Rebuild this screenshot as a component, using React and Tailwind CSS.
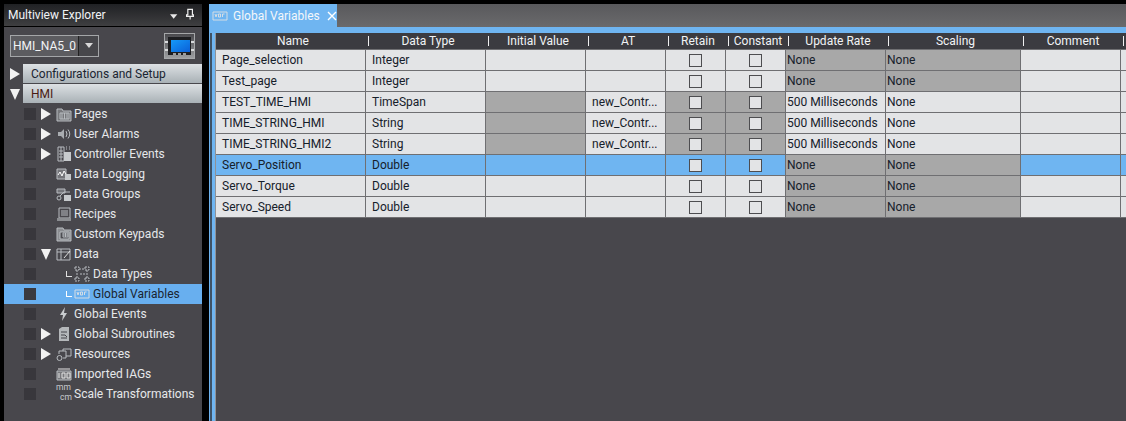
import React from "react";

const F = "font-['Roboto','Noto_Sans',sans-serif]";
const cols = "grid-cols-[150px_120px_100px_80px_60px_60px_100px_135px_100px_1fr]";

const headers = ["Name", "Data Type", "Initial Value", "AT", "Retain", "Constant", "Update Rate", "Scaling", "Comment", ""];

const rows = [
  { n: "Page_selection", t: "Integer", at: "", g: [], u: "None", s: "None", ug: true, sg: true },
  { n: "Test_page", t: "Integer", at: "", g: [], u: "None", s: "None", ug: true, sg: true },
  { n: "TEST_TIME_HMI", t: "TimeSpan", at: "new_Contr...", g: [2, 4, 5], u: "500 Milliseconds", s: "None" },
  { n: "TIME_STRING_HMI", t: "String", at: "new_Contr...", g: [2, 4, 5], u: "500 Milliseconds", s: "None" },
  { n: "TIME_STRING_HMI2", t: "String", at: "new_Contr...", g: [2, 4, 5], u: "500 Milliseconds", s: "None" },
  { n: "Servo_Position", t: "Double", at: "", g: [], u: "None", s: "None", ug: true, sg: true, sel: true },
  { n: "Servo_Torque", t: "Double", at: "", g: [], u: "None", s: "None", ug: true, sg: true },
  { n: "Servo_Speed", t: "Double", at: "", g: [], u: "None", s: "None", ug: true, sg: true },
];

const Ic = ({ children, w = 16, h = 16 }) => (
  <svg width={w} height={h} viewBox="0 0 16 16" fill="none" stroke="#b8bcc0" strokeWidth="1" className="shrink-0">
    {children}
  </svg>
);

const icons = {
  pages: <Ic><path d="M1 3h5l1 2h8v10H1z" fill="#77787c" /><path d="M4 7h9v6H4zM6 7v6M8.500 7v6M11 7v6" /></Ic>,
  alarms: <Ic><path d="M2 6h3l3-3v10l-3-3H2z" fill="#a9acb0" stroke="none" /><path d="M10 5q2 3 0 6M12 3.500q3.500 4.500 0 9" /></Ic>,
  events: <Ic><path d="M2 1h6v14H2z" /><path d="M8 6h7v9H8z" fill="#c8cbce" stroke="none" /><path d="M3 5h4M3 8h4M3 11h4M5 1v14M10 1h1M13 1h1M10 3h1M13 3h1" /></Ic>,
  logging: <Ic><path d="M1 3h9v10H1z" fill="#74757a" /><path d="M2 9l2-3 2 4 2-5 2 3" stroke="#fff" /><path d="M9 8h6v6H9z" fill="#c6c9cc" stroke="none" /></Ic>,
  groups: <Ic><path d="M1 3h8v4H1z" fill="#74757a" /><circle cx="3" cy="12" r="2" /><path d="M4 10l4-4h6" /><path d="M8 9h7v6H8z" fill="#c6c9cc" stroke="none" /></Ic>,
  recipes: <Ic><path d="M3 2h11v10H3z" /><path d="M5 5h7M5 7h7M5 9h7" /><path d="M1 12h14v3H1z" fill="#8b8d91" stroke="none" /></Ic>,
  keypads: <Ic><path d="M1 2h6l1 2h7v11H1z" fill="#8b8d91" /><path d="M4 6h9v7H4z" fill="#4d4d52" /><path d="M7 7h5v4H7zM9.500 7v4M7 9h5" /></Ic>,
  data: <Ic><path d="M1 3h13v11H1zM1 6h13M5 3v11" /><path d="M8 12l6-7" stroke="#e0e0e0" /></Ic>,
  types: <Ic><path d="M1 1h4v3H1zM11 1h4v3h-4zM1 12h4v3H1zM11 12h4v3h-4zM5 3h6M3 4v8M13 4v8M6 8h5" strokeDasharray="2 1" /></Ic>,
  vars: <Ic><path d="M1 4h14v8H1z" stroke="#d5dde4" /><path d="M3 6l1 3 1-3M6.500 6h2v3h-2zM10.500 9V6h2" stroke="#d5dde4" /></Ic>,
  bolt: <Ic><path d="M9 1L4 9h3l-1 6 5-8H8z" fill="#c8cbce" stroke="none" /></Ic>,
  subs: <Ic><path d="M3 3l3-2h7v14H3z" fill="#b4b7ba" stroke="none" /><path d="M5 6h6M5 9h4l2 2M5 12h6" stroke="#45454a" /></Ic>,
  res: <Ic><circle cx="3.500" cy="12" r="2.500" /><path d="M3 8V5h7v7H7M7 5V3h8v7h-5" /></Ic>,
  iags: <Ic><path d="M1 5h14v9H1z" fill="#77787c" /><path d="M2 3h12M3 7v5M6 7h3v5H6zM11 7h3v5h-3z" stroke="#e4e4e4" /></Ic>,
};

const scaleIcon = (
  <span className="w-4 h-4 relative shrink-0">
    <span className="absolute left-0 -top-[4px] text-[8.5px] leading-[10px] text-[#c8cbce]">mm</span>
    <span className="absolute left-[4px] top-[6px] text-[8.5px] leading-[10px] text-[#c8cbce]">cm</span>
  </span>
);

const tree = [
  { l: "Pages", a: "r", i: icons.pages },
  { l: "User Alarms", a: "r", i: icons.alarms },
  { l: "Controller Events", a: "r", i: icons.events },
  { l: "Data Logging", i: icons.logging },
  { l: "Data Groups", i: icons.groups },
  { l: "Recipes", i: icons.recipes },
  { l: "Custom Keypads", i: icons.keypads },
  { l: "Data", a: "d", i: icons.data },
  { l: "Data Types", sub: true, i: icons.types },
  { l: "Global Variables", sub: true, sel: true, i: icons.vars },
  { l: "Global Events", i: icons.bolt },
  { l: "Global Subroutines", a: "r", i: icons.subs },
  { l: "Resources", a: "r", i: icons.res },
  { l: "Imported IAGs", i: icons.iags },
  { l: "Scale Transformations", i: scaleIcon },
];

const TriR = ({ s = 10, c = "#f2f2f2" }) => (
  <svg width={s} height={s + 2} viewBox="0 0 10 12"><path d="M0 0l10 6-10 6z" fill={c} /></svg>
);
const TriD = ({ s = 10, c = "#f2f2f2" }) => (
  <svg width={s} height={s + 2} viewBox="0 0 10 12"><path d="M0 1h10L5 12z" fill={c} /></svg>
);

function TreeRow({ r }) {
  return (
    <div className={`h-5 flex items-center ${r.sel ? "bg-[#68afef] text-[#1a2430]" : "text-[#e6e8ea]"}`}>
      <span className={`ml-5 w-3 h-3 shrink-0 ${r.sel ? "bg-[#3a3a40]" : "bg-[#38373c]"}`} />
      <span className="w-[10px] ml-[5px] shrink-0 flex items-center">
        {r.a === "r" && <TriR />}
        {r.a === "d" && <TriD />}
      </span>
      {r.sub ? (
        <>
          <span className={`ml-[15px] w-[6px] h-[6px] border-l border-b shrink-0 ${r.sel ? "border-white" : "border-[#e0e0e0]"}`} />
          <span className="ml-[2px] flex">{r.i}</span>
          <span className="ml-[3px]">{r.l}</span>
        </>
      ) : (
        <>
          <span className="ml-[5px] flex">{r.i}</span>
          <span className="ml-[2px]">{r.l}</span>
        </>
      )}
    </div>
  );
}

function Cell({ children, grey, sel, center, dark }) {
  const bg = sel ? "bg-[#6fb5f1]" : grey ? "bg-[#a8a8a8]" : "bg-[#e3e4e6]";
  const pad = center ? "justify-center" : dark ? "pl-px" : "pl-[6px] pb-px";
  return (
    <div className={`${bg} h-[21px] border-r border-b border-[#6f6f72] flex items-center overflow-hidden whitespace-nowrap ${pad}`}>
      {children}
    </div>
  );
}

const Check = () => <span className="w-[13px] h-[13px] border border-[#4d4d50] bg-[#e3e4e6] block" />;

export default function App() {
  return (
    <div className={`${F} w-[1126px] h-[421px] bg-black flex pt-1 pl-1 overflow-hidden text-[12px] leading-4`}>
      <aside className="w-[198px] shrink-0 bg-[#48474c] flex flex-col">
        <div className="h-[23px] shrink-0 bg-gradient-to-b from-[#202124] to-[#3f3f41] border-b border-black flex items-center pl-1 pr-2 text-[#f1f3f5] whitespace-nowrap">
          <span>Multiview Explorer</span>
          <span className="ml-2 w-[50px] h-[6px] bg-[radial-gradient(#77797c_0.5px,transparent_0.6px)] bg-[length:2px_2px]" />
          <svg width="8" height="5" viewBox="0 0 8 5" className="ml-[11px] mt-[3px]"><path d="M0 0h8L4 5z" fill="#e8e8e8" /></svg>
          <svg width="9" height="12" viewBox="0 0 9 12" className="ml-[8px] -mt-[2px]"><path d="M2 1h5v6h1.500v1.500h-8V7H2zM4.500 8.500V12" fill="none" stroke="#f0f0f0" strokeWidth="1.300" /></svg>
        </div>
        <div className="h-[37px] shrink-0 flex items-center pl-[6px] pr-[7px] justify-between">
          <div className="w-[89px] h-[22px] border border-[#a4a6a8] bg-[#5c5c60] flex items-center text-[#f1f3f5]">
            <span className="pl-[2px] w-[67px] overflow-hidden whitespace-nowrap">HMI_NA5_0</span>
            <span className="flex-1 h-full border-l border-[#222] bg-[#47474b] flex items-center justify-center">
              <svg width="8" height="5" viewBox="0 0 8 5"><path d="M0 0h8L4 5z" fill="#d8d8d8" /></svg>
            </span>
          </div>
          <svg width="31" height="26" viewBox="0 0 31 26" className="shrink-0">
            <defs>
              <linearGradient id="mfr" x1="0" y1="0" x2="0" y2="1"><stop offset="0" stopColor="#48484c" /><stop offset="1" stopColor="#9ea0a2" /></linearGradient>
              <linearGradient id="mscr" x1="0" y1="0" x2="1" y2="1"><stop offset="0" stopColor="#159af8" /><stop offset="1" stopColor="#0a5fd8" /></linearGradient>
            </defs>
            <rect x="0.500" y="0.500" width="30" height="25" fill="url(#mfr)" stroke="#a5a7a9" />
            <rect x="4" y="4" width="23" height="18" fill="#1d1e21" />
            <rect x="1" y="8" width="3" height="2" fill="#d8dadc" /><rect x="1" y="16" width="3" height="2" fill="#d8dadc" />
            <rect x="27" y="8" width="3" height="2" fill="#d8dadc" /><rect x="27" y="16" width="3" height="2" fill="#d8dadc" />
            <rect x="7" y="7" width="19" height="12" fill="url(#mscr)" />
            <rect x="9" y="20" width="3" height="2" fill="#9a9c9e" /><rect x="14" y="20" width="3" height="2" fill="#9a9c9e" /><rect x="19" y="20" width="3" height="2" fill="#9a9c9e" />
          </svg>
        </div>
        <div className="flex flex-col">
          <div className="flex h-[20px]">
            <span className="w-[19px] flex items-center justify-center pl-[2px]"><TriR /></span>
            <span className="flex-1 bg-gradient-to-b from-[#dde1e4] to-[#a9b1b6] border-b border-[#48474c] pl-2 flex items-center text-[#1a2430]">Configurations and Setup</span>
          </div>
          <div className="flex h-[20px]">
            <span className="w-[19px] flex items-center justify-center pl-[2px]"><TriD /></span>
            <span className="flex-1 bg-gradient-to-b from-[#dde1e4] to-[#a9b1b6] border-b border-[#48474c] pl-2 flex items-center text-[#4a1a12]">HMI</span>
          </div>
          {tree.map((r) => <TreeRow key={r.l} r={r} />)}
        </div>
      </aside>

      <div className="w-[7px] shrink-0 bg-black" />
      <main className="flex-1 min-w-0 flex flex-col bg-[#48474c]">
        <div className="h-[23px] shrink-0 bg-gradient-to-b from-[#59595c] to-[#6a6a6c]">
          <div className="w-[128px] h-full bg-[#6fb5f1] flex items-center pl-[3px] text-[#f4f7fa] whitespace-nowrap">
            <span className="flex">{icons.vars}</span>
            <span className="ml-[5px]">Global Variables</span>
            <svg width="10" height="10" viewBox="0 0 10 10" className="ml-[7px]"><path d="M1 1l8 8M9 1l-8 8" stroke="#fff" strokeWidth="1.400" /></svg>
          </div>
        </div>
        <div className="h-[6px] shrink-0 bg-[#6fb5f1]" />
        <div className="flex-1 flex min-h-0">
          <div className="w-px bg-[#6fb5f1] shrink-0" />
          <div className="w-[2px] bg-[#3e5266] shrink-0" />
          <div className="w-[3px] bg-[#6fb5f1] shrink-0" />
          <div className="w-px bg-[#8f9296] shrink-0" />
          <div className="flex-1 min-w-0 bg-[#48474c] overflow-hidden">
            <div className={`grid ${cols} h-[16px] bg-[#3b3b40] border-b border-[#6f6f72] box-content`}>
              {headers.map((h, i) => (
                <div key={i} className="relative flex items-center justify-center pl-1 text-[#f1f3f5] whitespace-nowrap">
                  {h}
                  {i < 9 && <span className="absolute -right-[3px] top-[3px] w-px h-[10px] bg-[#f0f0f0]" />}
                </div>
              ))}
            </div>
            {rows.map((r) => (
              <div key={r.n} className={`grid ${cols} text-[#16202a]`}>
                <Cell sel={r.sel}>{r.n}</Cell>
                <Cell sel={r.sel}>{r.t}</Cell>
                <Cell sel={r.sel} grey={r.g.includes(2)} />
                <Cell sel={r.sel}>{r.at}</Cell>
                <Cell sel={r.sel} grey={r.g.includes(4)} center><Check /></Cell>
                <Cell sel={r.sel} grey={r.g.includes(5)} center><Check /></Cell>
                <Cell grey={r.ug} dark>{r.u}</Cell>
                <Cell grey={r.sg} dark>{r.s}</Cell>
                <Cell sel={r.sel} />
                <Cell sel={r.sel} />
              </div>
            ))}
          </div>
        </div>
      </main>
    </div>
  );
}
